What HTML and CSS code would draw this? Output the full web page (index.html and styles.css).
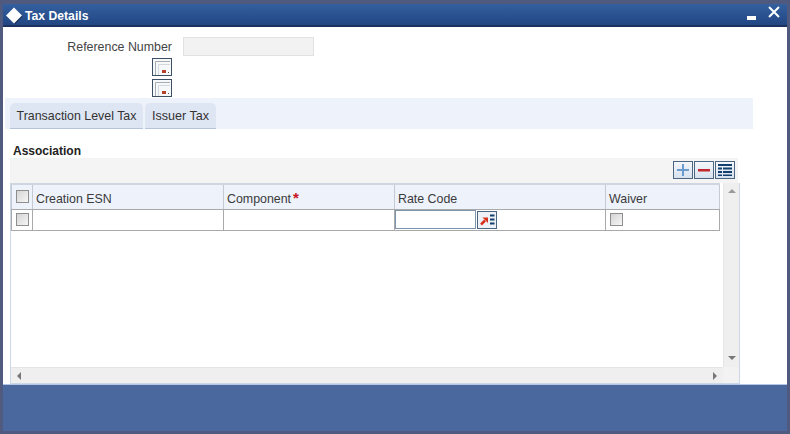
FILE: index.html
```html
<!DOCTYPE html>
<html lang="en">
<head>
<meta charset="utf-8">
<title>Tax Details</title>
<link rel="stylesheet" href="styles.css">
</head>
<body>
<div class="window">
  <header class="titlebar">
    <div class="title-left">
      <svg class="diamond" width="17" height="18" viewBox="0 0 17 18"><path d="M9 2L16.500 9.500 9 17 1.500 9.500Z" fill="#12284f"/><path d="M8 0.500L16 8.500 8 16.500 0 8.500Z" fill="#fff"/></svg>
      <span class="title-text">Tax Details</span>
    </div>
    <div class="title-actions">
      <svg class="min-icon" width="9" height="4" viewBox="0 0 9 4"><rect width="9" height="4" fill="#fff"/></svg>
      <svg class="close-icon" width="12" height="12" viewBox="0 0 12 12"><path d="M1 1L11 11M11 1L1 11" stroke="#fff" stroke-width="2"/></svg>
    </div>
  </header>
  <main class="content">
    <div class="ref-row">
      <label class="ref-label">Reference Number</label>
      <div class="ref-input"></div>
    </div>
    <div class="doc-buttons">
      <button class="doc-btn"><svg width="18" height="16" viewBox="0 0 18 16"><rect width="18" height="16" fill="#f7f8f9"/><path d="M2.500 16V2.500H17" fill="none" stroke="#a5adb5" stroke-width="1"/><path d="M5.500 16V5.500H17" fill="none" stroke="#d4d8dc" stroke-width="1"/><rect x="9" y="11" width="4" height="3" fill="#b5432c"/><rect x="15" y="13" width="1" height="1" fill="#555"/></svg></button>
      <button class="doc-btn"><svg width="18" height="16" viewBox="0 0 18 16"><rect width="18" height="16" fill="#f7f8f9"/><path d="M2.500 16V2.500H17" fill="none" stroke="#a5adb5" stroke-width="1"/><path d="M5.500 16V5.500H17" fill="none" stroke="#d4d8dc" stroke-width="1"/><rect x="9" y="11" width="4" height="3" fill="#b5432c"/><rect x="15" y="13" width="1" height="1" fill="#555"/></svg></button>
    </div>
    <nav class="tabs">
      <div class="tab tab-first">Transaction Level Tax</div>
      <div class="tab tab-second">Issuer Tax</div>
    </nav>
    <h2 class="section-title">Association</h2>
    <div class="toolbar">
      <button class="tool-btn"><svg width="14" height="14" viewBox="0 0 14 14"><path d="M7 1V13M1 7H13" stroke="#6c9bd0" stroke-width="2"/></svg></button>
      <button class="tool-btn"><svg width="14" height="14" viewBox="0 0 14 14"><rect x="1" y="6" width="12" height="2.500" fill="#c0272d"/></svg></button>
      <button class="tool-btn"><svg width="16" height="14" viewBox="0 0 16 14"><path d="M1 1H15V3H1ZM1 4.500H5V6.500H1ZM6 4.500H15V6.500H6ZM1 8H5V10H1ZM6 8H15V10H6ZM1 11.500H5V13H1ZM6 11.500H15V13H6Z" fill="#123f6d"/></svg></button>
    </div>
    <div class="grid-wrap">
      <div class="grid-body">
        <table class="grid">
          <colgroup><col class="c1"><col class="c2"><col class="c3"><col class="c4"><col class="c5"></colgroup>
          <thead>
            <tr>
              <th><span class="check"></span></th>
              <th>Creation ESN</th>
              <th>Component<span class="req">*</span></th>
              <th>Rate Code</th>
              <th>Waiver</th>
            </tr>
          </thead>
          <tbody>
            <tr>
              <td><span class="check"></span></td>
              <td></td>
              <td></td>
              <td>
                <div class="rate-cell">
                  <div class="rate-input"></div>
                  <button class="lov-btn"><svg width="17" height="14" viewBox="0 0 17 14"><path d="M2 11.500L6 7.500" stroke="#d9301c" stroke-width="2.500" fill="none"/><path d="M3.500 4.500H9V10Z" fill="#d9301c"/><path d="M11 1.500H15.500V3.500H11ZM11 5.500H15.500V7.500H11ZM11 9.500H15.500V11.500H11Z" fill="#123f6d"/></svg></button>
                </div>
              </td>
              <td><span class="check check-waiver"></span></td>
            </tr>
          </tbody>
        </table>
      </div>
      <div class="vscroll">
        <span class="arrow arrow-up"></span>
        <span class="arrow arrow-down"></span>
      </div>
      <div class="hscroll">
        <span class="arrow arrow-left"></span>
        <span class="arrow arrow-right"></span>
      </div>
      <div class="corner"></div>
    </div>
  </main>
  <footer class="footer"></footer>
</div>
</body>
</html>
```

FILE: styles.css
```css
* { box-sizing: border-box; }
html, body { margin: 0; height: 100%; }
body {
  background: #4f5a7e;
  padding: 4px 3px 3px;
  font-family: "Liberation Sans", Arial, sans-serif;
  font-size: 12.4px;
  color: #2b2b2b;
}
button { padding: 0; font: inherit; cursor: pointer; }
.window {
  width: 784px;
  height: 427px;
  display: flex;
  flex-direction: column;
}
.titlebar {
  height: 23px;
  flex: none;
  background: linear-gradient(#34609f, #274d8c 70%, #234682);
  border-bottom: 2px solid #1b3160;
  display: flex;
  justify-content: space-between;
  align-items: center;
  padding: 0 7px 0 3px;
}
.title-left { display: flex; align-items: center; gap: 2px; padding-top: 2px; }
.diamond { display: block; }
.title-text { color: #fff; font-weight: bold; font-size: 12.2px; }
.title-actions { display: flex; align-items: flex-start; gap: 12px; height: 18px; }
.min-icon { margin-top: 10px; }
.close-icon { margin-top: 0; }
.content {
  height: 357px;
  flex: none;
  background: #fff;
  display: flex;
  flex-direction: column;
}
.ref-row {
  display: flex;
  align-items: center;
  padding: 10px 0 0 0;
  height: 29px;
}
.ref-label {
  width: 169px;
  text-align: right;
  color: #444;
}
.ref-input {
  width: 131px;
  height: 19px;
  margin-left: 11px;
  background: #f2f2f2;
  border: 1px solid #e2e2e2;
}
.doc-buttons {
  display: flex;
  flex-direction: column;
  gap: 3px;
  padding: 2px 0 0 149px;
  height: 42px;
}
.doc-btn {
  width: 20px;
  height: 18px;
  border: 1px solid #3d4f63;
  background: #fff;
  display: flex;
  align-items: flex-start;
  justify-content: flex-start;
}
.tabs {
  margin-left: 2px;
  width: 748px;
  height: 31px;
  background: #eef2fb;
  display: flex;
  align-items: flex-end;
  gap: 2px;
  padding-left: 5px;
}
.tab {
  height: 26px;
  background: #dfe6f3;
  border-bottom: 1px solid #b4c3d9;
  border-radius: 5px 5px 0 0;
  display: flex;
  align-items: center;
  justify-content: center;
  color: #333;
}
.tab-first { width: 133px; }
.tab-second { width: 71px; font-size: 12.6px; }
.section-title {
  margin: 0;
  padding: 15px 0 0 10px;
  height: 29px;
  font-size: 12px;
  font-weight: bold;
  line-height: 14px;
  color: #222;
}
.toolbar {
  margin-left: 7px;
  width: 728px;
  height: 25px;
  background: #f4f4f4;
  display: flex;
  justify-content: flex-end;
  align-items: flex-start;
  gap: 1px;
  padding: 3px 3px 0 0;
  flex: none;
}
.tool-btn {
  width: 20px;
  height: 18px;
  border: 1px solid #4a6680;
  background: linear-gradient(#f4f7fb, #d7e2ee);
  display: flex;
  align-items: center;
  justify-content: center;
}
.grid-wrap {
  margin: 0 0 0 7px;
  width: 730px;
  height: 201px;
  flex: none;
  border: 1px solid #cbd6e6;
  border-width: 0 1px 1px 1px;
  display: grid;
  grid-template-columns: 712px 16px;
  grid-template-rows: 184px 16px;
}
.grid-body { background: #fff; overflow: hidden; }
.grid {
  border-collapse: collapse;
  table-layout: fixed;
  width: 708px;
  margin: 0;
}
.c1 { width: 21px; }
.c2 { width: 191px; }
.c3 { width: 171px; }
.c4 { width: 211px; }
.c5 { width: 114px; }
.grid th, .grid td {
  padding: 0 3px;
  border: 1px solid #a9a9a9;
  text-align: left;
  font-weight: normal;
  color: #3a3a3a;
}
.grid th {
  height: 25px;
  background: #eef2fb;
  border-top: 2px solid #cfd6e2;
  border-left-color: #c4c9d2;
  border-right-color: #c4c9d2;
  vertical-align: bottom;
  padding-bottom: 3px;
}
.grid td { height: 21px; vertical-align: middle; }
.grid th:first-child, .grid td:first-child { padding: 0 0 0 4px; vertical-align: middle; }
.req { color: #c8141e; font-weight: bold; margin-left: 2px; font-size: 15px; line-height: 0; }
.check {
  display: block;
  width: 13px;
  height: 13px;
  border: 1px solid #8e8e8e;
  background: linear-gradient(135deg, #d4d4d4, #f6f6f6);
}
.check-waiver { margin-left: 1px; }
.grid td:nth-child(4) { padding: 0; }
.rate-cell { display: flex; align-items: center; gap: 0; }
.rate-input {
  width: 81px;
  height: 19px;
  border: 1px solid #7d95ad;
  background: #fff;
}
.lov-btn {
  width: 20px;
  height: 18px;
  margin-left: 1px;
  border: 1px solid #4a6680;
  background: #eef2f7;
  display: flex;
  align-items: center;
  justify-content: center;
}
.vscroll {
  background: #efefef;
  border-left: 1px solid #e5e5e5;
  display: flex;
  flex-direction: column;
  justify-content: space-between;
  align-items: center;
  padding: 6px 0 7px;
}
.hscroll {
  background: #efefef;
  border-top: 1px solid #e5e5e5;
  display: flex;
  justify-content: space-between;
  align-items: center;
  padding: 0 6px;
}
.corner { background: #f2f2f2; }
.arrow { width: 0; height: 0; display: block; border-style: solid; border-color: transparent; }
.arrow-up { border-width: 0 4px 4px; border-bottom-color: #9a9a9a; }
.arrow-down { border-width: 4px 4px 0; border-top-color: #777; }
.arrow-left { border-width: 4px 4px 4px 0; border-right-color: #777; }
.arrow-right { border-width: 4px 0 4px 4px; border-left-color: #777; }
.footer {
  flex: 1;
  background: #4a689e;
  border-top: 1px solid #b4c6e4;
}
```
